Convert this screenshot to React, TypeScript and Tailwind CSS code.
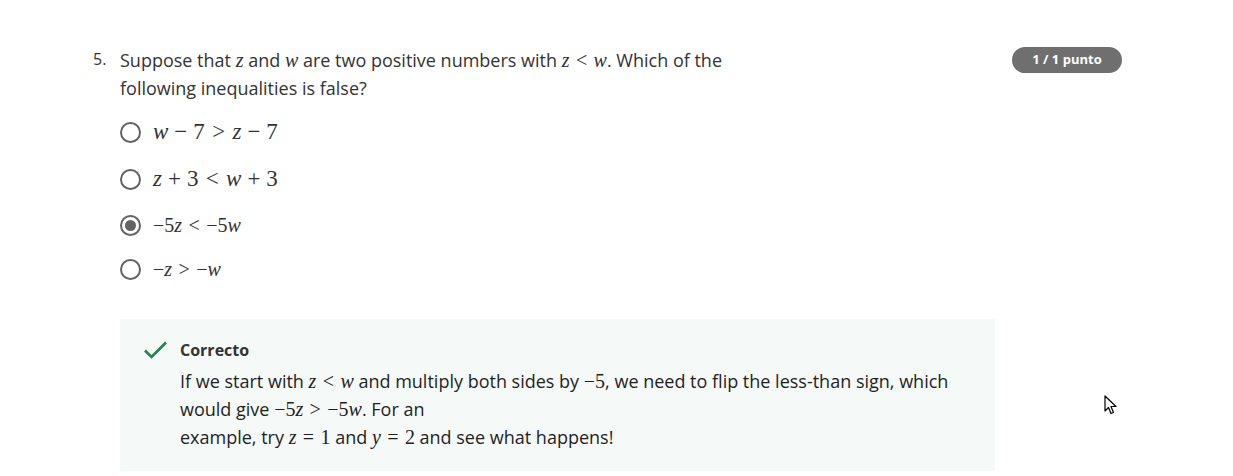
import React from "react";

const M = ({ children, className = "" }: { children: React.ReactNode; className?: string }) => (
  <span className={`whitespace-nowrap font-['Liberation_Serif',serif] ${className}`}>{children}</span>
);
const I = ({ children }: { children: React.ReactNode }) => <i>{children}</i>;
// binary operator (+, −) and relation (<, >, =) with KaTeX-like spacing
const B = ({ children }: { children: React.ReactNode }) => <span className="mx-[0.26em]">{children}</span>;
const R = ({ children }: { children: React.ReactNode }) => <span className="mx-[0.32em]">{children}</span>;

const options = [
  { key: "a", big: true, content: <><I>w</I><B>−</B>7<R>&gt;</R><I>z</I><B>−</B>7</> },
  { key: "b", big: true, content: <><I>z</I><B>+</B>3<R>&lt;</R><I>w</I><B>+</B>3</> },
  { key: "c", big: false, checked: true, content: <>−5<I>z</I><R>&lt;</R>−5<I>w</I></> },
  { key: "d", big: false, content: <>−<I>z</I><R>&gt;</R>−<I>w</I></> },
];

function Radio({ checked }: { checked?: boolean }) {
  return (
    <span className="flex h-[21px] w-[21px] shrink-0 items-center justify-center rounded-full border-2 border-[#636363] bg-white">
      {checked && <span className="h-[11px] w-[11px] rounded-full bg-[#636363]" />}
    </span>
  );
}

export default function App() {
  return (
    <div className="relative h-[476px] w-full overflow-hidden bg-white font-['Open_Sans',sans-serif] text-[#1f1f1f]">
      <div className="flex pl-[93px] pr-[111px] pt-[46px]">
        <span className="w-[27px] shrink-0 pt-[1px] text-[16px] leading-[24px] text-[#333]">5.</span>
        <div className="flex-1">
          <p className="w-[640px] text-[18px] leading-[28px] text-[#333]">
            Suppose that <M className="text-[20px]"><I>z</I></M> and <M className="text-[20px]"><I>w</I></M> are two positive numbers with{" "}
            <M className="text-[20px]"><I>z</I><R>&lt;</R><I>w</I></M>. Which of the following inequalities is false?
          </p>

          <div className="mt-[18px] flex flex-col">
            {options.map((o, i) => (
              <label
                key={o.key}
                className={`flex items-center gap-[12px] ${i === 0 ? "" : i === 1 ? "mt-[23px]" : i === 2 ? "mt-[22px]" : "mt-[20px]"}`}
              >
                <Radio checked={o.checked} />
                <M className={`${o.big ? "text-[23px]" : "text-[20px]"} leading-[24px] text-[#333]`}>{o.content}</M>
              </label>
            ))}
          </div>

          <div className="mt-[38px] w-[875px] bg-[#f5f9f8] pb-[20px] pl-[23px] pt-[20px]">
            <div className="flex items-center gap-[12px]">
              <svg width="25" height="20" viewBox="0 0 25 20" fill="none">
                <path d="M2 10.5 L8.5 17 L23 2.5" stroke="#1f8354" strokeWidth="2.6" />
              </svg>
              <span className="text-[16px] font-bold leading-[22px] text-[#333]">Correcto</span>
            </div>
            <p className="mt-[6px] pl-[37px] text-[18px] leading-[28px] text-[#1f1f1f]">
              If we start with <M className="text-[20px]"><I>z</I><R>&lt;</R><I>w</I></M> and multiply both sides by{" "}
              <M className="text-[20px]">−5</M>, we need to flip the less-than sign, which
              <br />
              would give <M className="text-[20px]">−5<I>z</I><R>&gt;</R>−5<I>w</I></M>. For an
              <br />
              example, try <M className="text-[20px]"><I>z</I><R>=</R>1</M> and <M className="text-[20px]"><I>y</I><R>=</R>2</M> and see what happens!
            </p>
          </div>
        </div>
        <div className="shrink-0">
          <span className="inline-flex h-[26px] w-[110px] items-center justify-center rounded-full bg-[#6f6f6f] text-[13px] font-bold text-white">
            1 / 1 punto
          </span>
        </div>
      </div>

      <svg className="absolute left-[1104px] top-[395px]" width="14" height="22" viewBox="0 0 14 22">
        <path d="M1 1 L1 16 L4.5 12.5 L7 18.5 L9.5 17.5 L7 11.5 L12 11.5 Z" fill="white" stroke="black" strokeWidth="1.2" strokeLinejoin="round" />
      </svg>
    </div>
  );
}
